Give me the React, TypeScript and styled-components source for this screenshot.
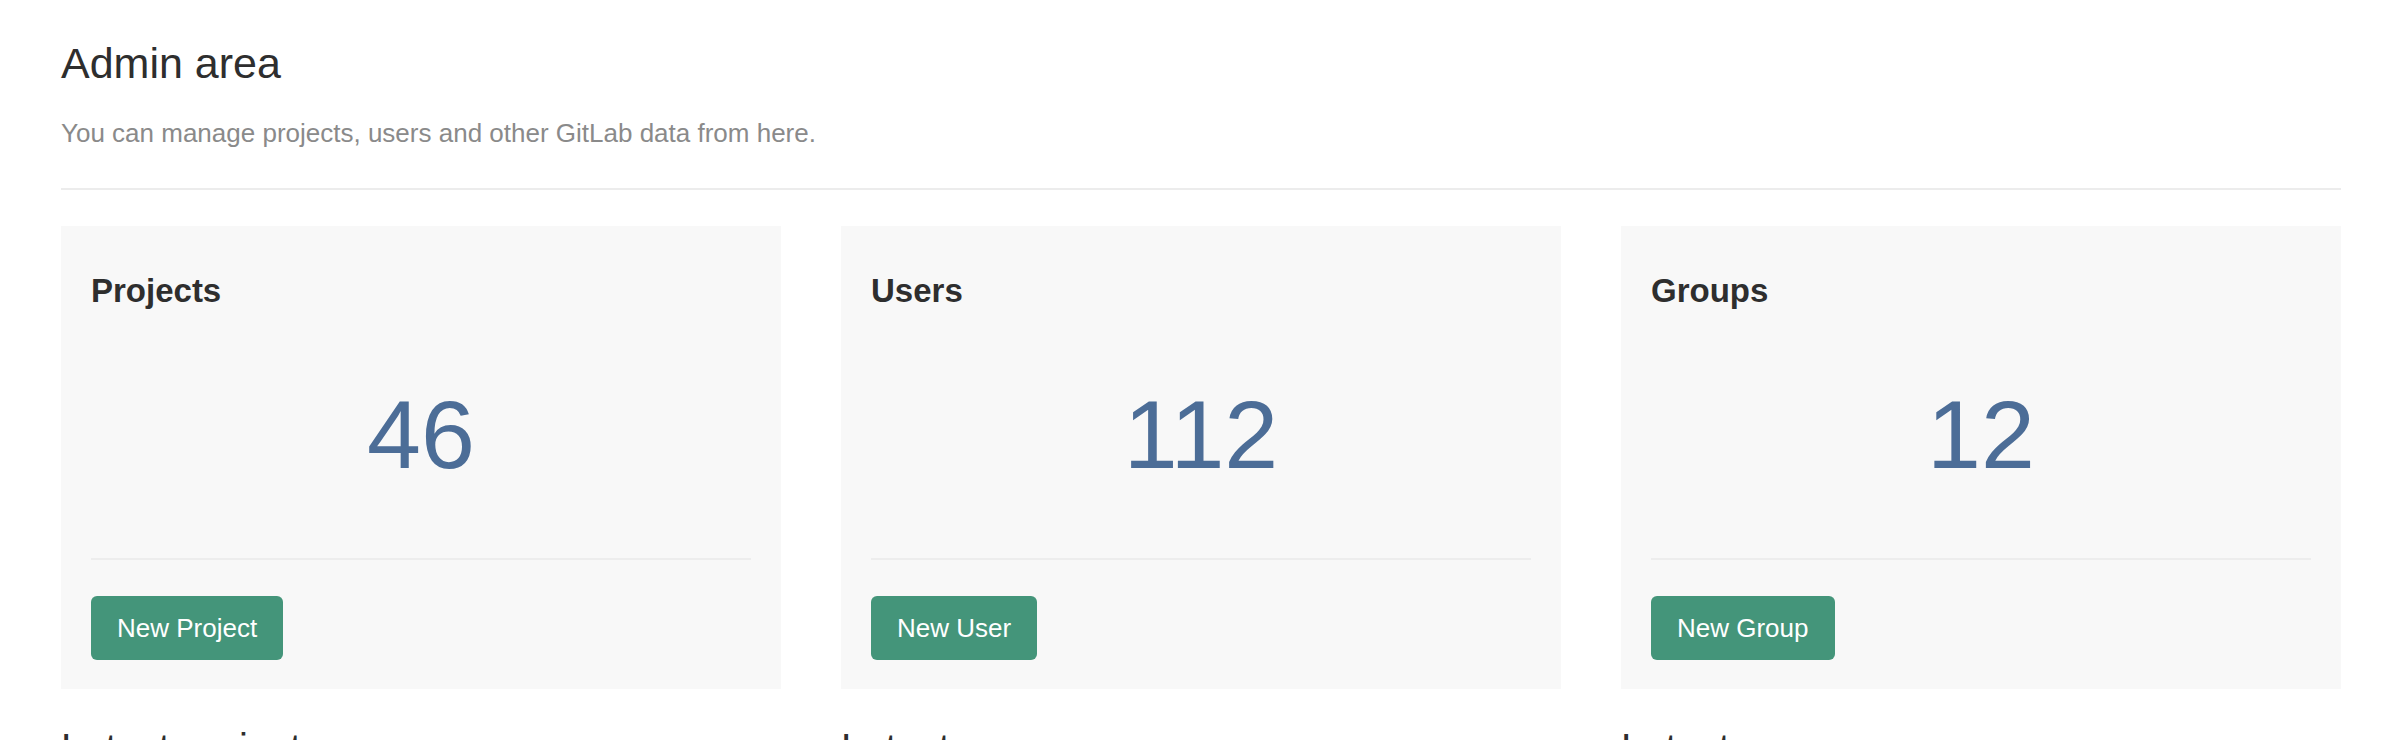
import { FunctionComponent } from "react";
import styled, { createGlobalStyle } from "styled-components";

const GlobalStyle = createGlobalStyle`
  html, body {
    margin: 0;
    padding: 0;
    background: #fff;
  }
  body {
    font-family: "Liberation Sans", Arial, Helvetica, sans-serif;
    color: #2e2e2e;
  }
`;

const Page = styled.div`
  width: 2402px;
  box-sizing: border-box;
  padding: 40px 61px 0;
`;
const Title = styled.h3`
  margin: 0;
  font-size: 43px;
  line-height: 46px;
  font-weight: 400;
  color: #2e2e2e;
`;
const Lead = styled.p`
  margin: 31px 0 0;
  font-size: 26px;
  line-height: 32px;
  color: #8a8a8a;
`;
const Rule = styled.hr`
  margin: 39px 0 0;
  border: 0;
  height: 2px;
  background: #ececec;
`;
const Columns = styled.div`
  margin-top: 36px;
  display: grid;
  grid-template-columns: repeat(3, 1fr);
  gap: 60px;
`;
const Column = styled.div`
  display: flex;
  flex-direction: column;
`;
const StatCard = styled.div`
  background: #f8f8f8;
  padding: 30px 30px 29px;
  display: flex;
  flex-direction: column;
`;
const CardTitle = styled.h4`
  margin: 17px 0 0;
  font-size: 33px;
  line-height: 36px;
  font-weight: 700;
  color: #2e2e2e;
`;
const Count = styled.div`
  margin-top: 78px;
  font-size: 97px;
  line-height: 96px;
  text-align: center;
  color: #4c6d97;
`;
const Divider = styled.div`
  margin-top: 75px;
  height: 2px;
  background: #ededed;
`;
const ButtonRow = styled.div`
  margin-top: 36px;
  display: flex;
`;
const GreenButton = styled.button`
  height: 64px;
  padding: 0 26px;
  border: 0;
  border-radius: 6px;
  background: #44957a;
  color: #fff;
  font-family: inherit;
  font-size: 26px;
  line-height: 64px;
  cursor: pointer;
`;
const SectionTitle = styled.h4`
  margin: 37px 0 0;
  font-size: 40px;
  line-height: 44px;
  font-weight: 400;
  color: #2e2e2e;
`;

const stats = [
  { title: "Projects", count: 46, action: "New Project", latest: "Latest projects" },
  { title: "Users", count: 112, action: "New User", latest: "Latest users" },
  { title: "Groups", count: 12, action: "New Group", latest: "Latest groups" },
];

const App: FunctionComponent = () => {
  return (
    <>
      <GlobalStyle />
      <Page>
        <Title>Admin area</Title>
        <Lead>You can manage projects, users and other GitLab data from here.</Lead>
        <Rule />
        <Columns>
          {stats.map((s) => (
            <Column key={s.title}>
              <StatCard>
                <CardTitle>{s.title}</CardTitle>
                <Count>{s.count}</Count>
                <Divider />
                <ButtonRow>
                  <GreenButton>{s.action}</GreenButton>
                </ButtonRow>
              </StatCard>
              <SectionTitle>{s.latest}</SectionTitle>
            </Column>
          ))}
        </Columns>
      </Page>
    </>
  );
};

export default App;
